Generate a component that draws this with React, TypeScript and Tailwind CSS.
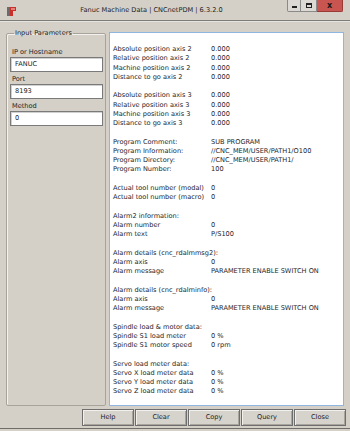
import React from 'react';

/**
 * Fanuc Machine Data window (CNCnetPDM).
 * Left: input parameters group, right: read-only result text, bottom: button row.
 */

type Row = [string, string] | [string] | null;

const rows: Row[] = [
  ['Absolute position axis 2', '0.000'],
  ['Relative position axis 2', '0.000'],
  ['Machine position axis 2', '0.000'],
  ['Distance to go axis 2', '0.000'],
  null,
  ['Absolute position axis 3', '0.000'],
  ['Relative position axis 3', '0.000'],
  ['Machine position axis 3', '0.000'],
  ['Distance to go axis 3', '0.000'],
  null,
  ['Program Comment:', 'SUB PROGRAM'],
  ['Program Information:', '//CNC_MEM/USER/PATH1/O100'],
  ['Program Directory:', '//CNC_MEM/USER/PATH1/'],
  ['Program Number:', '100'],
  null,
  ['Actual tool number (modal)', '0'],
  ['Actual tool number (macro)', '0'],
  null,
  ['Alarm2 information:'],
  ['Alarm number', '0'],
  ['Alarm text', 'P/S100'],
  null,
  ['Alarm details (cnc_rdalmmsg2):'],
  ['Alarm axis', '0'],
  ['Alarm message', 'PARAMETER ENABLE SWITCH ON'],
  null,
  ['Alarm details (cnc_rdalminfo):'],
  ['Alarm axis', '0'],
  ['Alarm message', 'PARAMETER ENABLE SWITCH ON'],
  null,
  ['Spindle load & motor data:'],
  ['Spindle S1 load meter', '0 %'],
  ['Spindle S1 motor speed', '0 rpm'],
  null,
  ['Servo load meter data:'],
  ['Servo X load meter data', '0 %'],
  ['Servo Y load meter data', '0 %'],
  ['Servo Z load meter data', '0 %'],
];

const fields = [
  { label: 'IP or Hostname', value: 'FANUC' },
  { label: 'Port', value: '8193' },
  { label: 'Method', value: '0' },
];

const buttons = ['Help', 'Clear', 'Copy', 'Query', 'Close'];

function AppIcon() {
  return (
    <svg width="9" height="9" viewBox="0 0 9 9">
      <rect x="0" y="0" width="3" height="9" fill="#6b6b6b" />
      <path d="M3 0 H9 V4 H6 V9 H3 Z" fill="#c8312b" />
      <rect x="4" y="1" width="4" height="2" fill="#e8817a" />
    </svg>
  );
}

function TitleBar() {
  return (
    <div className="h-[20px] flex items-start shrink-0">
      <div className="w-[16px] h-[20px] flex items-center justify-end pt-[2px]">
        <AppIcon />
      </div>
      <div className="flex-1 h-[20px] flex items-center justify-center pt-[2px] text-[6.6px] text-[#222]">
        Fanuc Machine Data | CNCnetPDM | 6.3.2.0
      </div>
      <div className="flex mr-[7px]">
        <div className="w-[14px] h-[12px] border border-t-0 border-[#8a8a8a] rounded-bl-[2px] bg-[#dcd9d4] flex items-end justify-center pb-[3px]">
          <div className="w-[5px] h-[2px] bg-[#222]" />
        </div>
        <div className="w-[16px] h-[12px] border border-t-0 border-l-0 border-[#8a8a8a] bg-[#dcd9d4] flex items-center justify-center">
          <div className="w-[6px] h-[5px] border border-t-2 border-[#222]" />
        </div>
        <div className="w-[26px] h-[12px] bg-[#c85550] border border-t-0 border-l-0 border-[#9a3a36] rounded-br-[2px] flex items-center justify-center text-[8px] font-bold leading-none text-[#1a1a1a]">
          x
        </div>
      </div>
    </div>
  );
}

function InputGroup() {
  return (
    <fieldset className="w-[100px] ml-[6px] mt-[-4px] border border-[#a7a39b] rounded-[2px] shadow-[inset_1px_1px_0_#f4f2ee] px-[3px] pr-[2px]">
      <legend className="ml-[4px] px-[1px] text-[6.6px] leading-[10px] text-[#222]">Input Parameters</legend>
      <div className="pt-[9px] flex flex-col">
        {fields.map((f, i) => (
          <div key={f.label} className={i > 0 ? 'mt-[2px]' : ''}>
            <div className="pl-[2px] h-[10px] leading-[10px] text-[6.6px] text-[#222]">{f.label}</div>
            <div className="h-[15px] bg-white border border-[#7a7a7a] shadow-[inset_1px_1px_0_#d0d0d0] pl-[4px] flex items-center text-[6.6px] text-[#222]">
              {f.value}
            </div>
          </div>
        ))}
      </div>
    </fieldset>
  );
}

function ResultText() {
  return (
    <div className="w-[235px] ml-[3px] bg-white border border-[#8fb6e0] pl-[3px] pt-[12px] text-[6.6px] text-[#23262d]">
      {rows.map((r, i) =>
        r === null ? (
          <div key={i} className="h-[9.25px]" />
        ) : (
          <div key={i} className="h-[9.25px] leading-[9.25px] flex whitespace-nowrap">
            <span className="w-[98px] shrink-0">{r[0]}</span>
            {r[1] !== undefined && <span>{r[1]}</span>}
          </div>
        )
      )}
    </div>
  );
}

export default function App() {
  return (
    <div className="w-[350px] h-[431px] bg-[#d4d0c8] flex flex-col overflow-hidden font-['DejaVu_Sans',Verdana,sans-serif]">
      <TitleBar />
      <div className="h-[2px] shrink-0 border-t border-[#7e7c77] bg-[#e6e4df]" />
      <div className="flex-1 flex flex-col pt-[10px] min-h-0">
        <div className="h-[374px] flex">
          <InputGroup />
          <ResultText />
        </div>
        <div className="mt-[3px] h-[17px] flex justify-end pr-[4px] gap-[1px]">
          {buttons.map((b) => (
            <button
              key={b}
              type="button"
              className="w-[52px] h-[17px] border border-[#6e6e6e] bg-[#d6d3cd] shadow-[inset_1px_1px_0_#f2f0ec,inset_-1px_-1px_0_#a8a59f] text-[6.6px] text-[#222] flex items-center justify-center"
            >
              {b}
            </button>
          ))}
        </div>
        <div className="mt-[2px] h-[1px] bg-[#6f6d69]" />
      </div>
    </div>
  );
}
